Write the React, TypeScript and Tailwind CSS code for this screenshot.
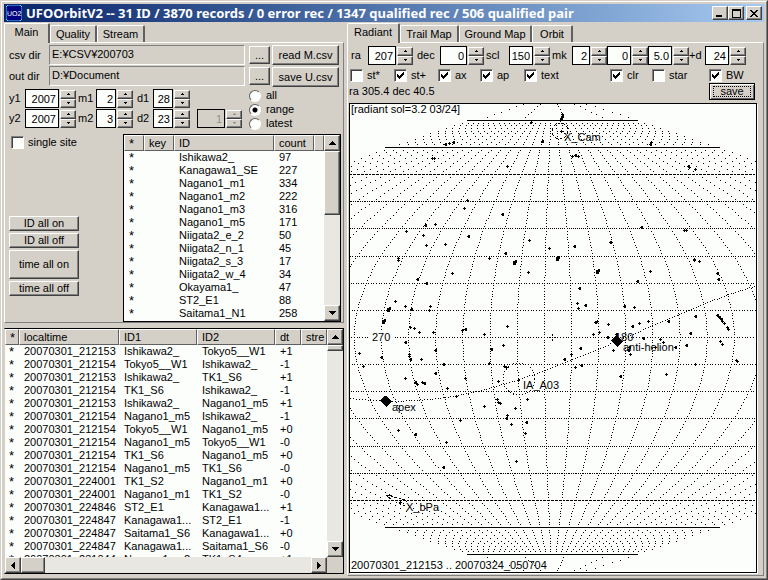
import React from "react";

const raised =
  "border border-t-white border-l-white border-b-[#404040] border-r-[#404040] shadow-[inset_-1px_-1px_0_#808080] bg-[#d4d0c8]";
const sunken = "border border-t-[#808080] border-l-[#808080] border-b-white border-r-white";
const dither =
  "bg-[#e9e7e2]";

function Arrow({ dir, small }: { dir: "up" | "down" | "left" | "right"; small?: boolean }) {
  const d = {
    up: "M3 0h1v1h1v1h1v1h1v1H0V3h1V2h1V1h1z",
    down: "M0 0h7v1H6v1H5v1H4v1H3V3H2V2H1V1H0z",
    left: "M0 3h1V2h1V1h1V0h1v7H3V6H2V5H1V4H0z",
    right: "M0 0h1v1h1v1h1v1h1v1H3v1H2v1H1v1H0z",
  }[dir];
  if (small) {
    return (
      <svg width="3" height="2" shapeRendering="crispEdges" fill="currentColor">
        <path d={dir === "up" ? "M1 0h1v1h1v1H0V1h1z" : "M0 0h3v1H2v1H1V1H0z"} />
      </svg>
    );
  }
  const tall = dir === "left" || dir === "right";
  return (
    <svg width={tall ? 4 : 7} height={tall ? 7 : 4} shapeRendering="crispEdges">
      <path d={d} />
    </svg>
  );
}

function Spin({ label, value, width, disabled }: { label: string; value: string; width: string; disabled?: boolean }) {
  const btn = `flex h-[9px] w-4 items-center justify-center ${raised}`;
  return (
    <div className={`flex h-[19px] shrink-0 items-center gap-px ${disabled ? "text-[#909090]" : ""}`}>
      <input
        aria-label={label}
        defaultValue={value}
        disabled={disabled}
        className={`h-[19px] border border-black pr-0.5 text-right outline-none ${width} ${disabled ? "bg-[#d4d0c8]" : "bg-[#fcfefc]"}`}
      />
      <div className="flex flex-col">
        <button aria-label={`${label} up`} disabled={disabled} className={btn}><Arrow dir="up" small /></button>
        <button aria-label={`${label} down`} disabled={disabled} className={btn}><Arrow dir="down" small /></button>
      </div>
    </div>
  );
}

function Check({ label, checked, width = "" }: { label: string; checked?: boolean; width?: string }) {
  return (
    <label className={`flex h-4 shrink-0 items-center gap-1 ${width}`}>
      <span className="grid size-[13px]">
        <input
          type="checkbox"
          defaultChecked={checked}
          className={`peer col-start-1 row-start-1 size-[13px] appearance-none bg-[#fcfefc] shadow-[inset_1px_1px_0_#404040] ${sunken}`}
        />
        <svg width="13" height="13" shapeRendering="crispEdges" className="pointer-events-none invisible col-start-1 row-start-1 peer-checked:visible">
          <path d="M3 5h1v1h1v1h1V6h1V5h1V4h1V3h1v3H9v1H8v1H7v1H6v1H5V9H4V8H3z" />
        </svg>
      </span>
      <span>{label}</span>
    </label>
  );
}

function Radio({ label, checked }: { label: string; checked?: boolean }) {
  return (
    <label className="flex h-[13px] items-center gap-[5px]">
      <input
        type="radio"
        name="span"
        defaultChecked={checked}
        className="size-3 appearance-none rounded-full border border-t-[#606060] border-l-[#606060] border-b-white border-r-white bg-[#fcfefc] checked:bg-[radial-gradient(circle,#000_0_2px,#fcfefc_3px)]"
      />
      <span>{label}</span>
    </label>
  );
}

function Button({ children, className }: { children: React.ReactNode; className: string }) {
  return <button className={`flex items-center justify-center whitespace-nowrap ${raised} ${className}`}>{children}</button>;
}

function Tabs({ items, label }: { items: [string, string][]; label: string }) {
  return (
    <div role="tablist" aria-label={label} className="flex h-5 items-end">
      {items.map(([name, width], i) => (
        <button
          key={name}
          role="tab"
          aria-selected={i === 0}
          className={`rounded-t-xs border-t border-l border-white border-r-2 border-r-[#606060] ${width} ${
            i === 0 ? "z-10 -mb-px h-5 bg-[#d4d0c8] pb-0.5" : "h-[17px]"
          }`}
        >
          {name}
        </button>
      ))}
    </div>
  );
}

function Star() {
  return <span className="block h-[13px] text-[13px] leading-[14px]">*</span>;
}

const th = "h-4 border border-t-white border-l-white border-b-[#606060] border-r-[#606060] bg-[#d4d0c8] px-1 py-0 text-left font-normal whitespace-nowrap";
const td = "h-[13px] px-[5px] py-0 whitespace-nowrap";

const sites: [string, number][] = [
  ["Ishikawa2_", 97], ["Kanagawa1_SE", 227], ["Nagano1_m1", 334], ["Nagano1_m2", 222], ["Nagano1_m3", 316],
  ["Nagano1_m5", 171], ["Niigata2_e_2", 50], ["Niigata2_n_1", 45], ["Niigata2_s_3", 17], ["Niigata2_w_4", 34],
  ["Okayama1_", 47], ["ST2_E1", 88], ["Saitama1_N1", 258],
];

const pairs: [string, string, string, string][] = [
  ["20070301_212153", "Ishikawa2_", "Tokyo5__W1", "+1"],
  ["20070301_212154", "Tokyo5__W1", "Ishikawa2_", "-1"],
  ["20070301_212153", "Ishikawa2_", "TK1_S6", "+1"],
  ["20070301_212154", "TK1_S6", "Ishikawa2_", "-1"],
  ["20070301_212153", "Ishikawa2_", "Nagano1_m5", "+1"],
  ["20070301_212154", "Nagano1_m5", "Ishikawa2_", "-1"],
  ["20070301_212154", "Tokyo5__W1", "Nagano1_m5", "+0"],
  ["20070301_212154", "Nagano1_m5", "Tokyo5__W1", "-0"],
  ["20070301_212154", "TK1_S6", "Nagano1_m5", "+0"],
  ["20070301_212154", "Nagano1_m5", "TK1_S6", "-0"],
  ["20070301_224001", "TK1_S2", "Nagano1_m1", "+0"],
  ["20070301_224001", "Nagano1_m1", "TK1_S2", "-0"],
  ["20070301_224846", "ST2_E1", "Kanagawa1...", "+1"],
  ["20070301_224847", "Kanagawa1...", "ST2_E1", "-1"],
  ["20070301_224847", "Saitama1_S6", "Kanagawa1...", "+0"],
  ["20070301_224847", "Kanagawa1...", "Saitama1_S6", "-0"],
  ["20070301_231044", "Nagano1_m2", "TK1_S4", "+1"],
];

function VScroll({ thumb }: { thumb: string }) {
  return (
    <div className={`flex w-4 shrink-0 flex-col ${dither}`}>
      <button aria-label="Scroll up" className={`flex size-4 shrink-0 items-center justify-center ${raised}`}><Arrow dir="up" /></button>
      <div className={`${raised} ${thumb}`} />
      <div className="flex-1" />
      <button aria-label="Scroll down" className={`flex size-4 shrink-0 items-center justify-center ${raised}`}><Arrow dir="down" /></button>
    </div>
  );
}

// Sinusoidal sky map: centre, degrees to pixels.
const CX = 202;
const CY = 233;
const S = 2.714;
const RA0 = 207;
const rad = Math.PI / 180;
const wrap = (d: number) => ((((d + 180) % 360) + 360) % 360) - 180;
const px = (off: number, dec: number) => Math.round(CX + off * Math.cos(dec * rad) * S);
const py = (dec: number) => Math.round(CY - dec * S);

function skyDots(): string {
  const out = new Set<string>();
  const dot = (x: number, y: number) => {
    if (x >= 0 && x < 408 && y >= 0 && y < 469) out.add(`M${x} ${y}h1v1h-1z`);
  };
  for (let dec = -80; dec <= 80; dec += 10) {
    for (let o = -180; o <= 180; o++) dot(px(o, dec), py(dec));
  }
  for (let ra = 0; ra < 360; ra += 10) {
    const o = wrap(RA0 - ra);
    for (let dec = -89; dec <= 89; dec++) {
      if (Math.abs(dec) > 80 && ra % 90 !== 0) continue;
      dot(px(o, dec), py(dec));
    }
  }
  for (let dec = -86; dec <= 86; dec++) {
    if (Math.abs(dec) > 80) dot(px(180, dec), py(dec));
  }
  for (let l = 0; l < 360; l++) {
    const dec = Math.asin(Math.sin(23.44 * rad) * Math.sin(l * rad)) / rad;
    const ra = Math.atan2(Math.cos(23.44 * rad) * Math.sin(l * rad), Math.cos(l * rad)) / rad;
    dot(px(wrap(RA0 - ra), dec), py(dec));
  }
  return [...out].join("");
}

// Single meteors, window coordinates: x, y, weight.
const radiants: number[][] = [
  [531,122,1],[542,141,2],[445,144,2],[449,143,1],[453,142,2],[432,158,1],[434,158,1],[507,166,1],[467,200,1],[464,208,1],
  [502,214,2],[425,225,2],[435,224,1],[406,231,1],[423,235,1],[468,236,2],[529,240,1],[426,245,1],[445,244,1],[549,248,1],
  [505,253,2],[398,258,1],[489,258,1],[557,258,3],[562,114,1],[562,116,2],[561,118,2],[560,120,1],[575,155,2],[572,156,1],[578,156,1],
  [650,144,2],[651,142,1],[688,166,2],[689,167,1],[695,169,1],[641,227,2],[684,230,1],[686,230,1],[610,242,2],[574,246,2],[694,259,1],[398,260,1],
  [514,262,3],[528,272,1],[452,273,1],[417,279,2],[426,283,2],[395,301,1],[405,306,1],[388,309,3],[411,309,2],[430,306,1],[429,310,1],
  [383,321,3],[410,327,1],[414,328,1],[419,332,1],[433,332,1],[462,330,1],[465,329,2],[484,334,1],[507,326,1],[503,345,1],[405,342,2],
  [491,349,2],[435,350,2],[359,353,1],[381,357,2],[409,354,1],[409,356,1],[410,359,2],[421,359,1],[443,364,2],[489,363,1],[504,366,1],[506,367,1],
  [363,366,1],[435,373,2],[405,378,1],[415,382,2],[417,384,1],[422,382,1],[424,383,2],[465,378,1],[498,381,1],[518,380,1],
  [447,388,1],[456,396,1],[497,399,1],[498,402,1],[500,403,1],[527,399,1],[484,406,1],[515,408,1],[507,415,1],[506,418,2],[597,271,3],[650,271,1],
  [694,260,1],[699,261,1],[637,281,2],[717,273,2],[718,279,2],[579,288,2],[577,303,1],[585,305,2],[578,308,1],[624,306,2],[634,307,1],
  [595,322,2],[597,321,1],[608,324,1],[668,321,2],[648,321,1],[639,323,1],[632,326,2],[695,316,2],[717,315,2],[719,317,2],[721,319,2],[722,321,1],
  [724,323,1],[727,327,1],[728,329,1],[599,332,1],[593,334,1],[607,337,2],[616,334,2],[690,333,2],[643,338,2],[660,339,1],[663,342,1],[686,345,2],
  [720,341,1],[722,344,1],[580,348,2],[613,350,1],[628,350,2],[629,347,2],[630,354,1],[571,354,1],[564,359,2],[581,365,2],[575,367,1],
  [736,360,1],[737,361,1],[695,364,1],[620,376,2],[666,374,1],[675,347,2],[655,347,1],[460,420,1],[511,424,1],[526,422,2],[525,433,1],
  [398,430,1],[415,434,2],[446,442,1],[516,461,1],[443,467,2],[400,502,1],
];

function starPath(): string {
  return radiants
    .map(([ax, ay, w]) => {
      const x = ax - 350;
      const y = ay - 104;
      let d = `M${x - 1} ${y}h3v1h-3zM${x} ${y - 1}h1v3h-1z`;
      if (w > 1) d += `M${x} ${y - 1}h2v3h-2z`;
      if (w > 2) d += `M${x - 1} ${y - 1}h3v4h-3zM${x + 1} ${y - 2}h2v3h-2z`;
      return d;
    })
    .join("");
}

const dots = skyDots();
const stars = starPath();

function SkyMap() {
  return (
    <svg role="img" aria-label="Radiant map" className="block h-[468px] w-full bg-[#fcfefc]" fontSize="11">
      <g shapeRendering="crispEdges">
        <path d={dots} />
        <path d="M20 226h24v12H20z" fill="#fcfefc" />
        <path d={stars} />
        <path d="M202 230h1v2h-1zM202 235h1v2h-1zM199 233h2v1h-2zM204 233h2v1h-2zM210 27h3v1h-3zM211 26h1v3h-1z" />
        <path d="M36 292h1v1h1v1h1v1h1v1h1v1h1v1h-1v1h-1v1h-1v1h-1v1h-1v1h-1v-1h-1v-1h-1v-1h-1v-1h-1v-1h-1v-1h-1v-1h1v-1h1v-1h1v-1h1v-1h1z" />
        <path d="M267 232h1v1h1v1h1v1h1v1h1v1h1v1h-1v1h-1v1h-1v1h-1v1h-1v1h-1v-1h-1v-1h-1v-1h-1v-1h-1v-1h-1v-1h-1v-1h1v-1h1v-1h1v-1h1v-1h1z" />
        <path d="M36 391h6v1h-4v1h2v1h1v1h-2v-1h-1v-1h-1v-1h-1z" />
      </g>
      <g fill="none" stroke="black" shapeRendering="crispEdges">
        <circle cx="210" cy="27" r="8" strokeDasharray="3 2" />
        <circle cx="169" cy="275" r="16" strokeDasharray="1 2" />
        <path d="M41 392l14 4l4 4M42 396l8 4l6 2" strokeDasharray="2 2" />
      </g>
      <text x="1" y="9">[radiant sol=3.2 03/24]</text>
      <text x="214" y="37">X_Cam</text>
      <text x="22" y="237">270</text>
      <text x="265" y="237">180</text>
      <text x="273" y="247">anti-helion</text>
      <text x="173" y="285">IA_A03</text>
      <text x="42" y="307">apex</text>
      <text x="56" y="407">X_bPa</text>
      <text x="1" y="465">20070301_212153 .. 20070324_050704</text>
    </svg>
  );
}

export default function App() {
  return (
    <div className="flex min-h-screen flex-col border border-t-[#d4d0c8] border-l-[#d4d0c8] border-r-[#404040] border-b-[#404040] bg-[#d4d0c8] font-['Liberation_Sans','Noto_Sans_CJK_JP',sans-serif] text-[11px] leading-[13px] text-black">
      <div className="flex flex-1 flex-col border border-t-white border-l-white border-b-[#808080] border-r-[#808080] px-0.5 pt-0.5">
        <header className="flex h-[18px] shrink-0 items-center bg-linear-to-r from-[#0a246a] to-[#a6caf0] pr-0.5 pl-0.5 text-white">
          <svg width="16" height="16" className="mr-1">
            <path d="M2 0h12l2 2v12l-2 2H2l-2-2V2z" fill="#000080" stroke="#40e0ff" />
            <text x="1" y="11" fontSize="7" fill="white" textRendering="geometricPrecision">UO2</text>
          </svg>
          <h1 className="min-w-0 flex-1 font-['Noto_Sans',sans-serif] text-[13px] leading-[18px] font-bold whitespace-nowrap">
            UFOOrbitV2 -- 31 ID / 3870 records / 0 error rec / 1347 qualified rec / 506 qualified pair
          </h1>
          <div className="flex">
            <button aria-label="Minimize" className={`flex h-3.5 w-4 items-center justify-center ${raised}`}>
              <svg width="10" height="9"><path d="M1 6h6v2H1z" /></svg>
            </button>
            <button aria-label="Maximize" className={`flex h-3.5 w-4 items-center justify-center ${raised}`}>
              <svg width="9" height="9" shapeRendering="crispEdges"><path d="M0 0h9v9H0zM1 2v6h7V2z" fillRule="evenodd" /></svg>
            </button>
            <button aria-label="Close" className={`ml-0.5 flex h-3.5 w-4 items-center justify-center ${raised}`}>
              <svg width="8" height="7" shapeRendering="crispEdges"><path d="M0 0h2v1h1v1h2V1h1V0h2v1H7v1H6v1H5v1h1v1h1v1h1v1H6V6H5V5H3v1H2v1H0V6h1V5h1V4h1V3H2V2H1V1H0z" /></svg>
            </button>
          </div>
        </header>

        <main className="flex flex-1 gap-[3px] pb-0.5">
          <div className="flex w-[340px] shrink-0 flex-col">
            <Tabs label="Data" items={[["Main", "w-[46px]"], ["Quality", "w-[47px]"], ["Stream", "w-[48px]"]]} />
            <section className="flex h-[281px] flex-col border border-t-white border-l-white border-b-[#808080] border-r-[#808080] pt-0.5 pl-1">
              <div className="flex h-[21px] items-start">
                <span className="w-10 pt-1">csv dir</span>
                <output className={`mr-1 h-5 w-[196px] pt-0.5 pl-0.5 ${sunken}`}>E:¥CSV¥200703</output>
                <Button className="mt-px mr-0.5 h-[18px] w-[21px]">...</Button>
                <Button className="h-5 w-[67px]">read M.csv</Button>
              </div>
              <div className="flex h-[23px] items-start">
                <span className="w-10 pt-1">out dir</span>
                <output className={`mr-1 h-5 w-[196px] pt-0.5 pl-0.5 ${sunken}`}>D:¥Document</output>
                <Button className="mt-px mr-0.5 h-[18px] w-[21px]">...</Button>
                <Button className="mt-px h-5 w-[67px]">save U.csv</Button>
              </div>
              <div className="flex">
                <div className="flex w-[240px] flex-col gap-px">
                  <div className="flex items-center">
                    <span className="w-4">y1</span><Spin label="y1" value="2007" width="w-[34px]" />
                    <span className="w-5 pl-0.5">m1</span><Spin label="m1" value="2" width="w-[20px]" />
                    <span className="w-5 pl-1">d1</span><Spin label="d1" value="28" width="w-[20px]" />
                  </div>
                  <div className="flex items-center">
                    <span className="w-4">y2</span><Spin label="y2" value="2007" width="w-[34px]" />
                    <span className="w-5 pl-0.5">m2</span><Spin label="m2" value="3" width="w-[20px]" />
                    <span className="w-5 pl-1">d2</span><Spin label="d2" value="23" width="w-[20px]" />
                    <span className="w-[7px]" />
                    <Spin label="count" value="1" width="w-[28px]" disabled />
                  </div>
                </div>
                <fieldset className="flex flex-col gap-px">
                  <Radio label="all" />
                  <Radio label="range" checked />
                  <Radio label="latest" />
                </fieldset>
              </div>
              <div className="flex pt-1">
                <div className="flex w-[114px] flex-col">
                  <div className="pl-0.5"><Check label="single site" /></div>
                  <div className="flex flex-col items-start gap-0.5 pt-[66px]">
                    <Button className="h-[15px] w-[70px]">ID all on</Button>
                    <Button className="h-[15px] w-[70px]">ID all off</Button>
                    <Button className="h-[29px] w-[70px]">time all on</Button>
                    <Button className="h-[15px] w-[70px]">time all off</Button>
                  </div>
                </div>
                <div className="flex h-[188px] w-[218px] overflow-hidden border border-black bg-[#fcfefc]">
                  <div className="flex-1 overflow-hidden bg-[#fcfefc]">
                    <table className="w-full table-fixed border-separate border-spacing-0">
                      <colgroup><col className="w-5" /><col className="w-[30px]" /><col className="w-[100px]" /><col className="w-10" /><col /></colgroup>
                      <thead><tr><th className={th}><Star /></th><th className={th}>key</th><th className={th}>ID</th><th className={th}>count</th><th className={th} /></tr></thead>
                      <tbody>
                        {sites.map(([id, n]) => (
                          <tr key={id}><td className={td}><Star /></td><td /><td className={td}>{id}</td><td className={td}>{n}</td><td /></tr>
                        ))}
                      </tbody>
                    </table>
                  </div>
                  <VScroll thumb="h-16" />
                </div>
              </div>
            </section>

            <section className="mt-[5px] flex h-[246px] flex-col border border-t-black border-r-black border-b-black border-l-[#d4d0c8] bg-[#fcfefc]">
              <div className="flex min-h-0 flex-1">
                <div className="flex-1 overflow-hidden">
                  <table className="w-full table-fixed border-separate border-spacing-0">
                    <colgroup><col className="w-[14px]" /><col className="w-[100px]" /><col className="w-[78px]" /><col className="w-[78px]" /><col className="w-[26px]" /><col /></colgroup>
                    <thead><tr><th className={th}><Star /></th><th className={th}>localtime</th><th className={th}>ID1</th><th className={th}>ID2</th><th className={th}>dt</th><th className={th}>stre</th></tr></thead>
                    <tbody>
                      {pairs.map(([t, a, b, dt], i) => (
                        <tr key={i}><td className="h-[13px] px-1 py-0"><Star /></td><td className={td}>{t}</td><td className={td}>{a}</td><td className={td}>{b}</td><td className={td}>{dt}</td><td /></tr>
                      ))}
                    </tbody>
                  </table>
                </div>
                <VScroll thumb="h-1.5" />
              </div>
              <div className={`flex h-4 shrink-0 ${dither}`}>
                <button aria-label="Scroll left" className={`flex size-4 items-center justify-center ${raised}`}><Arrow dir="left" /></button>
                <div className={`w-6 ${raised}`} />
                <div className="flex-1" />
                <button aria-label="Scroll right" className={`flex size-4 items-center justify-center ${raised}`}><Arrow dir="right" /></button>
                <div className="w-4 bg-[#d4d0c8]" />
              </div>
            </section>
          </div>

          <div className="flex min-w-0 flex-1 flex-col">
            <Tabs label="Plots" items={[["Radiant", "w-[53px]"], ["Trail Map", "w-[59px]"], ["Ground Map", "w-[73px]"], ["Orbit", "w-[41px]"]]} />
            <section className="flex flex-1 flex-col border border-t-white border-l-white border-b-[#808080] border-r-[#808080] pt-[3px] pl-px">
              <div className="flex items-center pl-0.5">
                <span className="w-[17px]">ra</span><Spin label="ra" value="207" width="w-[28px]" />
                <span className="w-[27px] pl-1">dec</span><Spin label="dec" value="0" width="w-[27px]" />
                <span className="w-[25px] pl-0.5">scl</span><Spin label="scl" value="150" width="w-[24px]" />
                <span className="w-[22px] pl-0.5">mk</span><Spin label="mk" value="2" width="w-[18px]" />
                <Spin label="mk 2" value="0" width="w-[24px]" />
                <Spin label="mk 3" value="5.0" width="w-[24px]" />
                <span className="w-4">+d</span><Spin label="+d" value="24" width="w-[24px]" />
              </div>
              <div className="flex items-center pt-0.5 pl-px">
                <Check label="st*" width="w-11" />
                <Check label="st+" checked width="w-11" />
                <Check label="ax" checked width="w-[42px]" />
                <Check label="ap" checked width="w-11" />
                <Check label="text" checked width="w-[86px]" />
                <Check label="clr" checked width="w-[42px]" />
                <Check label="star" width="w-[57px]" />
                <Check label="BW" checked />
              </div>
              <div className="flex h-5 items-start justify-between pr-2">
                <span className="pt-0.5">ra 305.4 dec 40.5</span>
                <button className="flex h-[17px] w-[46px] items-center justify-center border border-black shadow-[inset_1px_1px_0_#fff,inset_-1px_-1px_0_#606060]">
                  <span className="h-[11px] border border-dotted border-black px-1.5 leading-[9px]">save</span>
                </button>
              </div>
              <div className="mr-1.5 border border-black shadow-[1px_1px_0_#fff]"><SkyMap /></div>
            </section>
          </div>
        </main>
      </div>
    </div>
  );
}
